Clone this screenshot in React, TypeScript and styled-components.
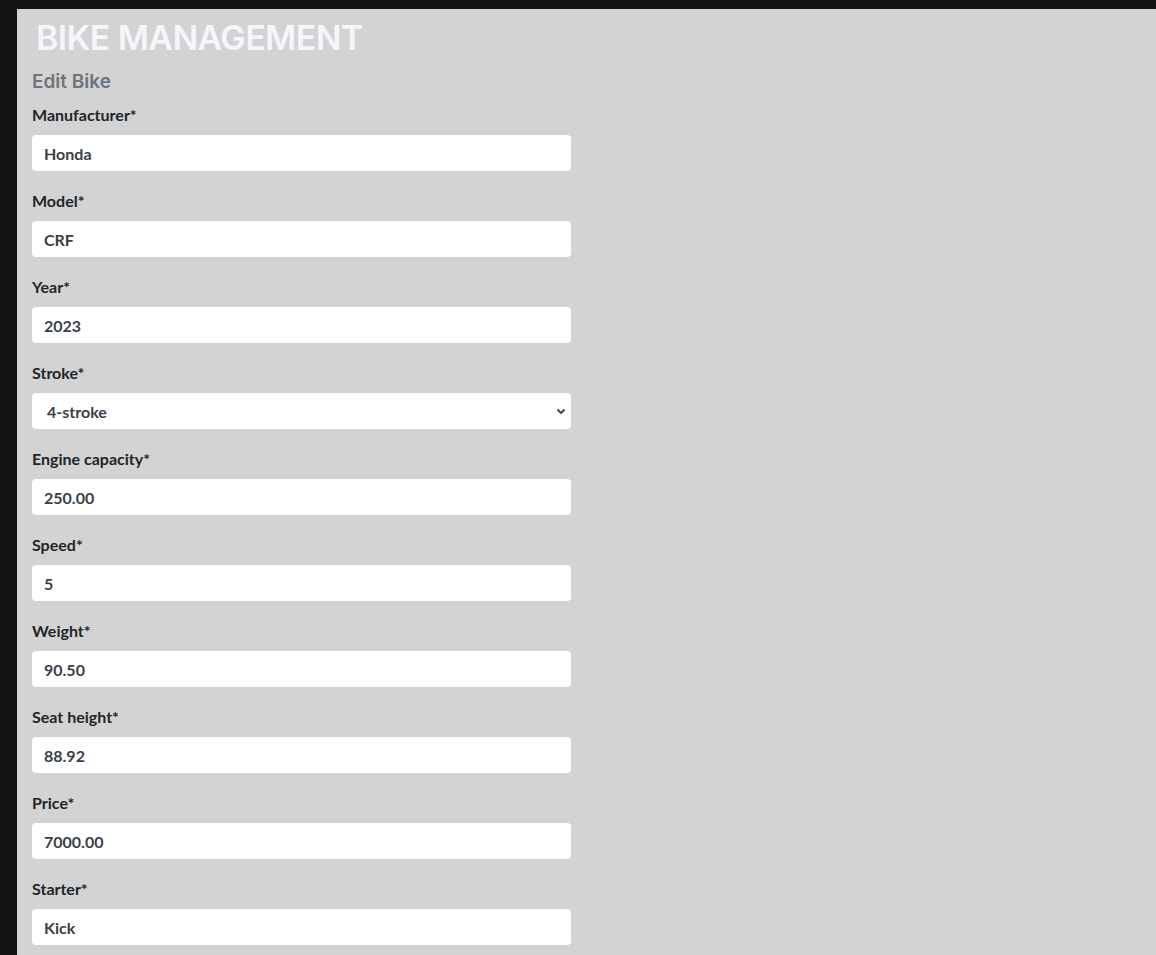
import React from "react";
import styled, { createGlobalStyle } from "styled-components";

const GlobalStyle = createGlobalStyle`
  html, body {
    margin: 0;
    padding: 0;
    background: #121212;
    font-family: "Lato", "Noto Sans", sans-serif;
  }
  * { box-sizing: border-box; }
`;

const Page = styled.div`
  padding: 9px 0 0 17px;
  min-height: 955px;
`;

const Panel = styled.main`
  background: #d3d3d3;
  min-height: 946px;
  padding: 0 0 40px 0;
`;

const Title = styled.h1`
  margin: 0;
  padding: 5px 0 0 19px;
  font-family: "Inter", "Lato", sans-serif;
  font-weight: 600;
  font-size: 34px;
  line-height: 48px;
  color: #f4f6fb;
  letter-spacing: -0.65px;
`;

const Form = styled.form`
  padding: 0 0 0 15px;
  width: 555px;
`;

const Subtitle = styled.h2`
  margin: 8px 0 10px 0;
  font-family: "Inter", "Lato", sans-serif;
  font-weight: 600;
  font-size: 19px;
  line-height: 24px;
  color: #6c757d;
`;

const Field = styled.div`
  display: flex;
  flex-direction: column;
  margin-bottom: 19px;
`;

const Label = styled.label`
  font-family: "Lato", "Noto Sans", sans-serif;
  font-weight: 700;
  font-size: 16px;
  line-height: 22px;
  color: #212529;
  margin-bottom: 9px;
`;

const Input = styled.input`
  width: 539px;
  height: 36px;
  border: none;
  border-radius: 4px;
  background: #ffffff;
  padding: 0 12px;
  font-family: "Lato", "Noto Sans", sans-serif;
  font-weight: 700;
  font-size: 16px;
  color: #3a3f47;
  outline: none;
`;

const SelectWrap = styled.div`
  position: relative;
  width: 539px;
`;

const Select = styled.select`
  appearance: none;
  width: 539px;
  height: 36px;
  border: none;
  border-radius: 4px;
  background: #ffffff;
  padding: 0 12px 0 15px;
  font-family: "Lato", "Noto Sans", sans-serif;
  font-weight: 700;
  font-size: 16px;
  color: #3a3f47;
  outline: none;
`;

const Chevron = styled.svg`
  position: absolute;
  right: 5px;
  top: 13px;
  width: 10px;
  height: 10px;
  pointer-events: none;
`;

type FieldDef = { label: string; value: string; select?: boolean };

const fields: FieldDef[] = [
  { label: "Manufacturer*", value: "Honda" },
  { label: "Model*", value: "CRF" },
  { label: "Year*", value: "2023" },
  { label: "Stroke*", value: "4-stroke", select: true },
  { label: "Engine capacity*", value: "250.00" },
  { label: "Speed*", value: "5" },
  { label: "Weight*", value: "90.50" },
  { label: "Seat height*", value: "88.92" },
  { label: "Price*", value: "7000.00" },
  { label: "Starter*", value: "Kick" },
];

export default function App() {
  return (
    <>
      <GlobalStyle />
      <Page>
        <Panel>
          <Title>BIKE MANAGEMENT</Title>
          <Form onSubmit={(e) => e.preventDefault()}>
            <Subtitle>Edit Bike</Subtitle>
            {fields.map((f) => (
              <Field key={f.label}>
                <Label>{f.label}</Label>
                {f.select ? (
                  <SelectWrap>
                    <Select defaultValue={f.value}>
                      <option value="2-stroke">2-stroke</option>
                      <option value="4-stroke">4-stroke</option>
                    </Select>
                    <Chevron viewBox="0 0 10 10">
                      <path d="M1.5 3.5 L5 7 L8.5 3.5" fill="none" stroke="#3a3f47" strokeWidth="1.8" />
                    </Chevron>
                  </SelectWrap>
                ) : (
                  <Input defaultValue={f.value} />
                )}
              </Field>
            ))}
          </Form>
        </Panel>
      </Page>
    </>
  );
}
